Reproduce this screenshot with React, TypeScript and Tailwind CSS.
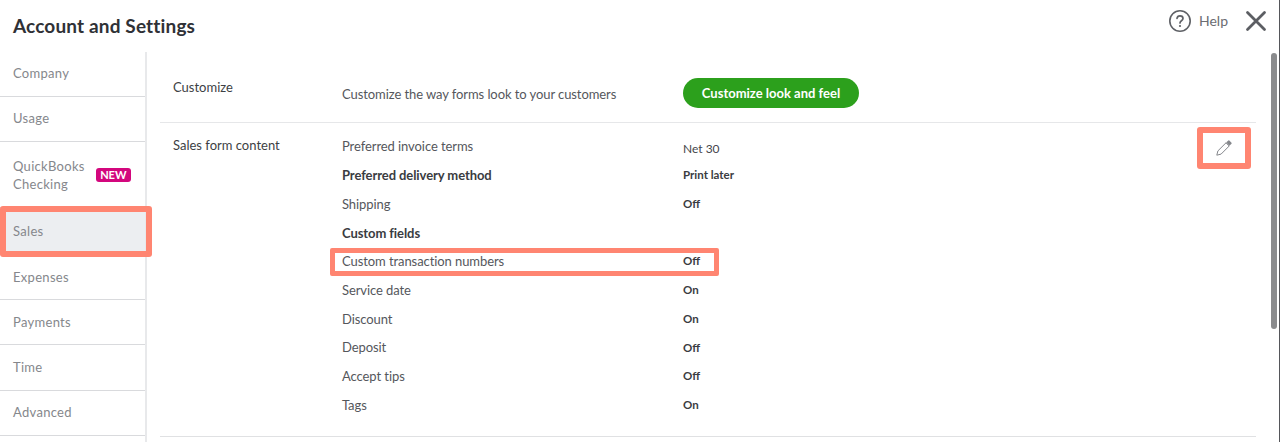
import React from "react";

const nav = [
  { label: "Company", h: "h-[45px] pb-[2px]" },
  { label: "Usage", h: "h-[45px] pb-[2px]" },
  { label: "QuickBooks Checking", h: "h-[66px]", badge: true },
  { label: "Sales", h: "h-[47px]", active: true },
  { label: "Expenses", h: "h-[45px]" },
  { label: "Payments", h: "h-[45px]" },
  { label: "Time", h: "h-[46px] pb-[2px]" },
  { label: "Advanced", h: "h-[45px] pb-[2px]" },
];

const rows: { label: string; value?: string; bold?: boolean; labelCls?: string; valueCls?: string; valueBold?: boolean }[] = [
  { label: "Preferred invoice terms", value: "Net 30", labelCls: "-translate-y-[1px]", valueCls: "translate-y-[2px]" },
  { label: "Preferred delivery method", value: "Print later", bold: true, valueBold: true, valueCls: "-translate-y-[1px]" },
  { label: "Shipping", value: "Off", valueBold: true, valueCls: "-translate-y-[1.5px]" },
  { label: "Custom fields", bold: true },
  { label: "Custom transaction numbers", value: "Off", valueBold: true, valueCls: "-translate-y-[1.5px]" },
  { label: "Service date", value: "On", valueBold: true, valueCls: "-translate-y-[1.5px]" },
  { label: "Discount", value: "On", valueBold: true, valueCls: "-translate-y-[1.5px]" },
  { label: "Deposit", value: "Off", valueBold: true, valueCls: "-translate-y-[1.5px]" },
  { label: "Accept tips", value: "Off", valueBold: true, valueCls: "-translate-y-[1.5px]" },
  { label: "Tags", value: "On", valueBold: true, valueCls: "-translate-y-[1.5px]" },
];

export default function App() {
  return (
    <div className="relative h-[442px] w-[1280px] overflow-hidden bg-white font-['Lato','Liberation_Sans',sans-serif] text-[13px] text-[#55575c]">
      <header className="flex h-[52px] items-start justify-between pl-[13px] pr-[13px]">
        <h1 className="mt-[13px] text-[19px] font-bold leading-[26px] tracking-[0.15px] text-[#2f3136]">Account and Settings</h1>
        <div className="mt-[9px] flex items-center">
          <svg width="24" height="24" viewBox="0 0 24 24" fill="none" className="text-[#5f6166]">
            <circle cx="12" cy="12" r="10.2" stroke="currentColor" strokeWidth="1.6" />
            <path d="M9 9.4a3 3 0 0 1 3-2.6c1.7 0 3 1.1 3 2.6 0 2.300-3 2.400-3 4.500" stroke="currentColor" strokeWidth="1.700" strokeLinecap="round" />
            <circle cx="12" cy="17" r="1.100" fill="currentColor" />
          </svg>
          <span className="ml-[7px] text-[14px] leading-[24px] text-[#6b6c72]">Help</span>
          <svg width="22" height="22" viewBox="0 0 22 22" fill="none" className="ml-[17px] text-[#5c5e63]">
            <path d="M2.500 2.500 L19.500 19.500 M19.500 2.500 L2.500 19.500" stroke="currentColor" strokeWidth="2.800" strokeLinecap="round" />
          </svg>
        </div>
      </header>

      <div className="flex h-[390px]">
        <nav className="w-[147px] shrink-0 border-r-2 border-[#e8e9eb]">
          {nav.map((n) => (
            <div
              key={n.label}
              className={`flex items-center justify-between border-b border-[#d9dadd] pl-[13px] pr-[14px] tracking-[0.3px] text-[#85878c] ${n.h} ${n.active ? "bg-[#eceef1]" : ""}`}
            >
              <span className="w-[72px] leading-[18px]">{n.label}</span>
              {n.badge && (
                <span className="rounded-[3px] bg-[#d3077d] px-[4.5px] text-[11px] font-bold leading-[14px] tracking-normal text-white">NEW</span>
              )}
            </div>
          ))}
        </nav>

        <main className="ml-[13px] w-[1096px]">
          <section className="flex h-[71px] border-b border-[#e6e7e9]">
            <div className="w-[182px] pl-[13px] pt-[26px] leading-[18px] text-[#3d3f44]">Customize</div>
            <div className="w-[341px] pt-[33px] leading-[18px] tracking-[-0.08px]">Customize the way forms look to your customers</div>
            <button className="mt-[26px] h-[30px] w-[176px] rounded-full bg-[#2ca01c] pt-[2px] text-[13px] font-bold text-white">Customize look and feel</button>
          </section>

          <section className="flex h-[314px] border-b border-[#e0e1e3] pt-[10px]">
            <div className="w-[182px] pl-[13px] pt-[3px] leading-[18px] text-[#3d3f44]">Sales form content</div>
            <div className="flex-1">
              {rows.map((r) => (
                <div key={r.label} className="flex h-[28.7px] items-center">
                  <span className={`w-[341px] tracking-[-0.08px] ${r.bold ? "font-bold text-[#3a3c41]" : ""} ${r.labelCls ?? ""}`}>{r.label}</span>
                  {r.value && (
                    <span className={`${r.valueBold ? "text-[11.5px] font-bold text-[#3a3c41]" : "text-[12px] text-[#44464b]"} ${r.valueCls ?? ""}`}>{r.value}</span>
                  )}
                </div>
              ))}
            </div>
          </section>
        </main>
      </div>

      {/* Pencil, sitting in its annotation box */}
      <div className="absolute left-[1197px] top-[127px] flex h-[42px] w-[54px] items-center justify-center rounded-[3px] border-[6px] border-[#ff8571]">
        <svg width="16" height="16" viewBox="0 0 16 16" fill="none" className="text-[#85878c]">
          <path d="M0.800 15.200 L1.900 10.900 L10 2.800 L13.200 6 L5.100 14.100 Z" stroke="currentColor" strokeWidth="1" strokeLinejoin="round" />
          <path d="M10.200 2.600 L12.300 0.500 Q12.800 0.200 13.300 0.500 L15.500 2.700 Q15.800 3.200 15.500 3.700 L13.400 5.800 Z" fill="currentColor" />
        </svg>
      </div>

      {/* Annotation boxes */}
      <div className="pointer-events-none absolute left-0 top-[206px] h-[51px] w-[152px] rounded-[3px] border-[6px] border-[#ff8571]" />
      <div className="pointer-events-none absolute left-[330px] top-[248px] h-[28px] w-[389px] rounded-[2px] border-[5px] border-[#ff8571]" />

      {/* Scrollbar and window edge */}
      <div className="absolute left-[1271px] top-[53px] h-[276px] w-[6px] rounded-full bg-[#8a8b8d]" />
      <div className="absolute right-0 top-0 h-full w-px bg-[#55565a]" />
    </div>
  );
}
